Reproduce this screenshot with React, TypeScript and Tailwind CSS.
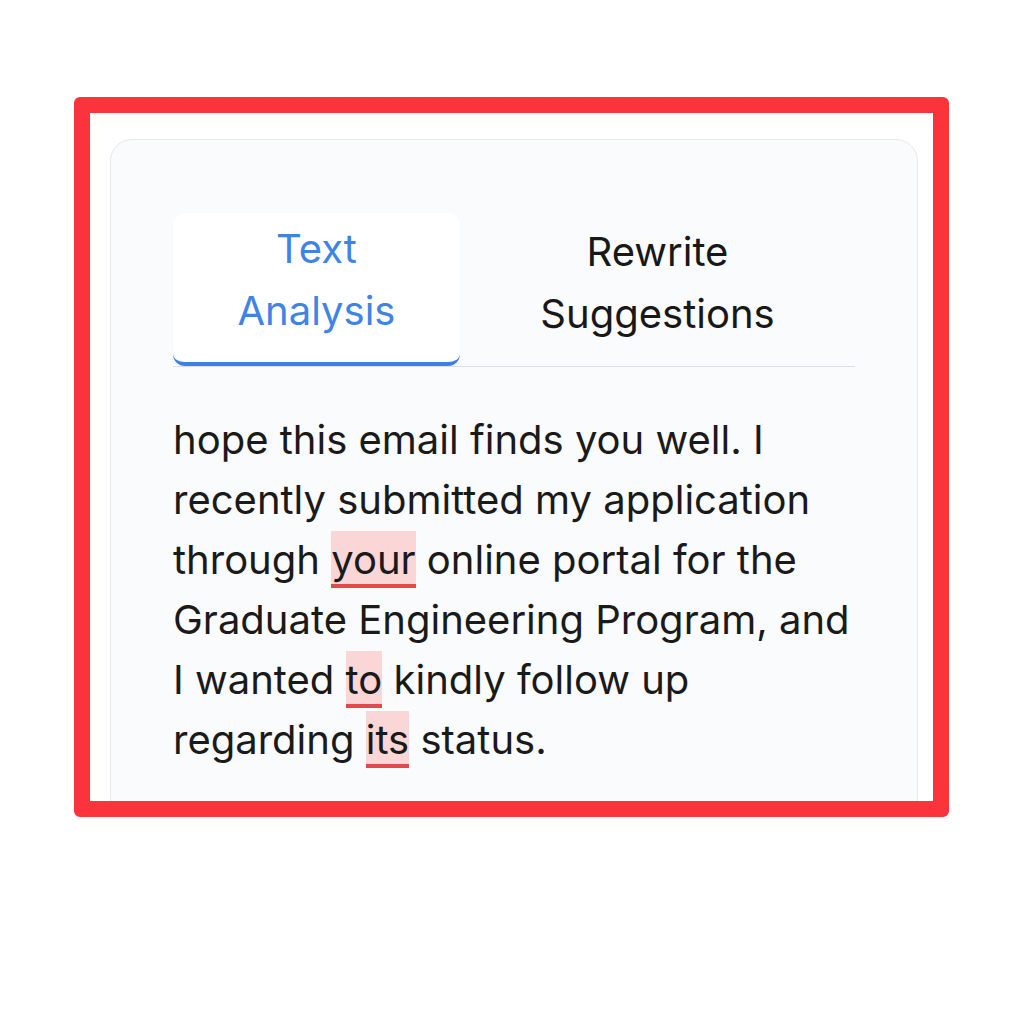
import React from 'react'

function Mark({ children }: { children: React.ReactNode }) {
  return (
    <span className="border-b-4 border-[#e04a4a] bg-[#fbd6d6] pt-1">
      {children}
    </span>
  )
}

export default function App() {
  return (
    <div
      className="flex h-[1024px] w-[1024px] bg-white pl-[74px] pt-[97px]"
      style={{ fontFamily: 'Inter, "Noto Sans", sans-serif' }}
    >
      <div className="h-[720px] w-[875px] overflow-hidden rounded-md border-[16px] border-[#fb333a] bg-white pl-[20px] pr-[15px] pt-[26px]">
        <div className="h-[720px] rounded-[22px] border border-[#e6e8ec] bg-[#fafbfc] px-[62px] pt-[73px]">
          <div className="flex border-b-[1.5px] border-[#dcdfe4]">
            <button
              type="button"
              className="w-[287px] rounded-xl border-b-4 border-[#3d80e4] bg-white pb-5 pt-[5px] text-[40px] leading-[62px] text-[#3f84e5] shadow-[0_1px_4px_rgba(0,0,0,0.025)]"
            >
              Text
              <br />
              Analysis
            </button>
            <button
              type="button"
              className="flex-1 pb-5 pt-[7px] text-[40px] leading-[62px] text-[#181818]"
            >
              Rewrite
              <br />
              Suggestions
            </button>
          </div>
          <p className="mt-[43px] text-[40px] leading-[60px] text-[#1a1a1a]">
            hope this email finds you well. I
            <br />
            recently submitted my application
            <br />
            through <Mark>your</Mark> online portal for the
            <br />
            Graduate Engineering Program, and
            <br />I wanted <Mark>to</Mark> kindly follow up
            <br />
            regarding <Mark>its</Mark> status.
          </p>
        </div>
      </div>
    </div>
  )
}
